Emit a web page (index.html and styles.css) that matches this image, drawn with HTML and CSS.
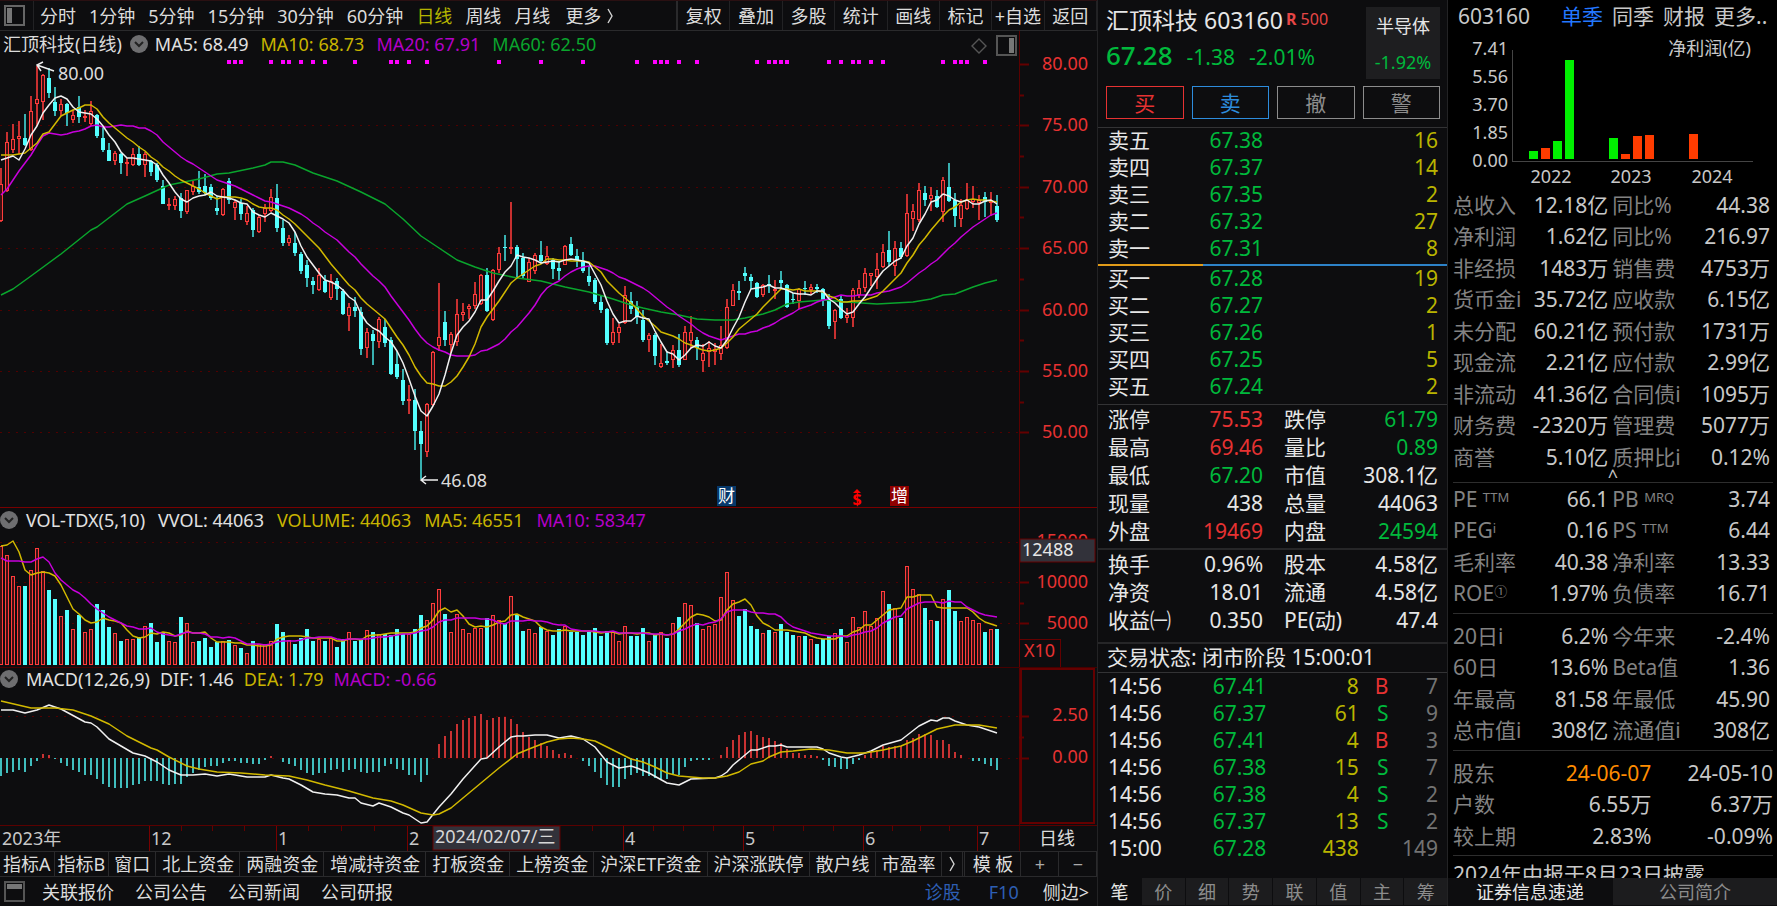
FILE: index.html
```html
<!DOCTYPE html>
<html lang="zh-CN">
<head>
<meta charset="utf-8">
<title>汇顶科技 603160</title>
<link rel="stylesheet" href="styles.css">
</head>
<body>
<div class="app">
  <main class="left">
    <nav class="toolbar">
      <button class="tool-icon" aria-label="左侧栏"><svg width="21" height="21" viewBox="0 0 21 21"><rect x="1" y="1" width="19" height="19" fill="none" stroke="#666" stroke-width="2"/><rect x="3" y="3" width="5" height="15" fill="#777"/></svg></button>
      <div class="periods">
        <button>分时</button><button>1分钟</button><button>5分钟</button><button>15分钟</button><button>30分钟</button><button>60分钟</button><button class="on">日线</button><button>周线</button><button>月线</button><button class="last">更多<svg class="more" width="8" height="16" viewBox="0 0 8 16"><path d="M2 1 L6 8 L2 15" fill="none" stroke="#d2d2d2" stroke-width="1.4"/></svg></button>
      </div>
      <div class="tools">
        <button>复权</button><button>叠加</button><button>多股</button><button>统计</button><button>画线</button><button>标记</button><button>+自选</button><button>返回</button>
      </div>
    </nav>

    <section class="panel panel-price">
      <svg class="chart" id="price"></svg>
      <header class="legend">
        <span class="name">汇顶科技(日线)</span>
        <button class="chev" aria-label="展开"><svg width="18" height="18" viewBox="0 0 18 18"><circle cx="9" cy="9" r="9" fill="#6e6e70"/><path d="M5 7 L9 11 L13 7" fill="none" stroke="#222" stroke-width="2"/></svg></button>
        <span class="w">MA5: 68.49</span><span class="y">MA10: 68.73</span><span class="m">MA20: 67.91</span><span class="g">MA60: 62.50</span>
        <span class="legend-icons"><svg width="16" height="16" viewBox="0 0 16 16"><path d="M8 1 L15 8 L8 15 L1 8 Z" fill="none" stroke="#555" stroke-width="1.4"/></svg><svg width="21" height="21" viewBox="0 0 21 21"><rect x="1" y="1" width="19" height="19" fill="none" stroke="#555" stroke-width="2"/><rect x="13" y="3" width="5" height="15" fill="#777"/></svg></span>
      </header>
    </section>
    <section class="panel panel-vol">
      <svg class="chart" id="vol"></svg>
      <header class="legend sub wide">
        <button class="chev" aria-label="展开"><svg width="18" height="18" viewBox="0 0 18 18"><circle cx="9" cy="9" r="9" fill="#6e6e70"/><path d="M5 7 L9 11 L13 7" fill="none" stroke="#222" stroke-width="2"/></svg></button>
        <span class="w">VOL-TDX(5,10)</span><span class="w">VVOL: 44063</span><span class="y">VOLUME: 44063</span><span class="y">MA5: 46551</span><span class="m">MA10: 58347</span>
      </header>
    </section>
    <section class="panel panel-macd">
      <svg class="chart" id="macd"></svg>
      <header class="legend sub">
        <button class="chev" aria-label="展开"><svg width="18" height="18" viewBox="0 0 18 18"><circle cx="9" cy="9" r="9" fill="#6e6e70"/><path d="M5 7 L9 11 L13 7" fill="none" stroke="#222" stroke-width="2"/></svg></button>
        <span class="w">MACD(12,26,9)</span><span class="w">DIF: 1.46</span><span class="y">DEA: 1.79</span><span class="m">MACD: -0.66</span>
      </header>
    </section>
    <div class="dates"><svg class="chart" id="dates"></svg></div>

    <nav class="indicators">
      <button class="tight">指标A</button><button class="tight">指标B</button><button class="box">窗口</button><button>北上资金</button><button>两融资金</button><button>增减持资金</button><button>打板资金</button><button>上榜资金</button><button>沪深ETF资金</button><button>沪深涨跌停</button><button>散户线</button><button>市盈率</button><button class="next" aria-label="更多指标"><svg width="8" height="16" viewBox="0 0 8 16"><path d="M2 1 L6 8 L2 15" fill="none" stroke="#d2d2d2" stroke-width="1.4"/></svg></button>
      <button class="tpl">模 板</button><button class="pm">+</button><button class="pm">−</button>
    </nav>
    <footer class="bottom">
      <button class="tool-icon" aria-label="下方栏"><svg width="21" height="21" viewBox="0 0 21 21"><rect x="1" y="1" width="19" height="19" fill="none" stroke="#555" stroke-width="2"/><rect x="3" y="3" width="15" height="5" fill="#777"/></svg></button>
      <a href="#">关联报价</a><a href="#">公司公告</a><a href="#">公司新闻</a><a href="#">公司研报</a>
      <span class="bottom-right"><a class="blue" href="#">诊股</a><a class="blue" href="#">F10</a><a href="#">侧边&gt;</a></span>
    </footer>
  </main>

  <aside class="quote">
    <header class="qhead">
      <div class="qtop">
        <div>
          <h1>汇顶科技 603160<small><b>R</b> 500</small></h1>
          <p class="qprice"><strong>67.28</strong><span>-1.38</span><span>-2.01%</span></p>
        </div>
        <a class="sector" href="#"><span>半导体</span><span class="dn">-1.92%</span></a>
      </div>
      <div class="trade"><button class="buy">买</button><button class="sell">卖</button><button>撤</button><button>警</button></div>
    </header>
    <table class="book" id="asks"></table>
    <div class="ratio"><i></i></div>
    <table class="book bids" id="bids"></table>
    <table class="stats" id="stats1"></table>
    <table class="stats thick" id="stats2"></table>
    <p class="status">交易状态: 闭市阶段 15:00:01</p>
    <table class="ticks" id="ticks"></table>
    <nav class="tabs"><button class="on">笔</button><button>价</button><button>细</button><button>势</button><button>联</button><button>值</button><button>主</button><button>筹</button></nav>
  </aside>

  <aside class="fund">
    <nav class="fhead"><span>603160</span><a class="on" href="#">单季</a><a href="#">同季</a><a href="#">财报</a><a href="#">更多..</a></nav>
    <div class="profit"><svg viewBox="0 0 329 157" width="329" height="157" id="profit"></svg></div>
    <table class="fin" id="fin1"></table>
    <div class="collapse"><button aria-label="收起">^</button></div>
    <table class="fin lined" id="fin2"></table>
    <table class="fin lined" id="fin3"></table>
    <table class="fin lined holders" id="fin4"></table>
    <p class="news">2024年中报于8月23日披露</p>
    <nav class="tabs ftabs"><button class="on">证券信息速递</button><button>公司简介</button></nav>
  </aside>
</div>
<script src="app.js"></script>
</body>
</html>
```

FILE: styles.css
```css
* { box-sizing: border-box; }
body {
  margin: 0;
  background: #0d0d0f;
  color: #dcdcdc;
  font-family: "Noto Sans", "Noto Sans CJK SC", sans-serif;
  font-size: 18px;
  line-height: 24px;
}
button {
  font: inherit;
  color: inherit;
  background: none;
  border: 0;
  padding: 0;
  margin: 0;
  white-space: nowrap;
  cursor: pointer;
}
a { color: inherit; text-decoration: none; }
p, h1 { margin: 0; font-weight: 400; }
svg { display: block; }
table { border-collapse: collapse; border-spacing: 0; width: 100%; table-layout: fixed; }
td, th { padding: 0; font-weight: 400; text-align: left; white-space: nowrap; }

.app {
  display: grid;
  grid-template-columns: minmax(0, 1fr) 351px 329px;
  grid-template-rows: minmax(0, 1fr);
  height: 100vh;
  min-height: 900px;
  overflow: hidden;
}
.left { display: flex; flex-direction: column; min-width: 0; }

/* top toolbar */
.toolbar {
  display: flex;
  height: 31px;
  flex: none;
  border-top: 1px solid #2a1012;
  border-bottom: 1px solid #2a2a2c;
}
.tool-icon { flex: none; width: 34px; padding-left: 4px; }
.toolbar .tool-icon { border-right: 1px solid #222224; }
.periods { display: flex; gap: 13px; padding-left: 6px; flex: 1; }
.periods button { display: flex; align-items: center; gap: 5px; }
.periods .on { color: #b4b400; }
.periods .last { padding-left: 2px; }
.tools { display: flex; flex: none; width: 421px; border-left: 2px solid #2a2a2c; }
.tools button { flex: 1 1 0; min-width: 0; border-right: 1px solid #222224; }

/* chart panels */
.panel { position: relative; min-height: 0; border-bottom: 1px solid #780000; }
.panel-price { flex: 478 1 0; }
.panel-vol { flex: 159 1 0; border-color: #460000; }
.panel-macd { flex: 158 1 0; border-color: #5a0000; }
.chart { position: absolute; inset: 0; width: 100%; height: 100%; overflow: hidden; }
.legend { position: relative; display: flex; align-items: center; gap: 12px; padding: 0 3px; height: 25px; white-space: nowrap; }
.legend.sub { padding: 0; height: 23px; gap: 10px; }
.legend.wide { gap: 13px; }
.legend .chev { margin: 0 -5px 0 -4px; }
.legend.sub .chev { margin: 0 -2px 0 0; }
.legend.wide .chev { margin: 0 -5px 0 0; }
.legend-icons { margin-left: auto; margin-right: 77px; display: flex; align-items: center; gap: 9px; padding-top: 4px; }
.w { color: #e1e1e1; }
.y { color: #c8b400; }
.m { color: #b400c8; }
.g { color: #0aa52d; }
.dates { position: relative; flex: none; height: 25px; }

/* indicator and link bars */
.indicators { display: flex; flex: none; height: 26px; border-top: 1px solid #2a2a2c; border-bottom: 1px solid #2a2a2c; }
.indicators button { padding: 0 5px 0 6px; border-right: 1px solid #2a2a2c; }
.indicators .tight { padding: 0 3px; }
.indicators .box { padding: 0 5px; }
.indicators .next { padding: 0 6px; }
.indicators .tpl { margin-left: auto; width: 57px; border-left: 1px solid #2a2a2c; }
.indicators .pm { width: 38px; color: #aaa; }
.bottom { display: flex; align-items: center; gap: 21px; flex: none; height: 29px; }
.bottom .tool-icon { width: 21px; box-sizing: content-box; margin-right: -4px; }
.bottom-right { margin-left: auto; margin-right: 8px; display: flex; gap: 24px; }
.blue { color: #2d5fb4; }
.bottom-right .blue:first-child { margin-right: 4px; }

/* quote column */
.quote {
  display: flex;
  flex-direction: column;
  border-left: 1px solid #232325;
  border-right: 1px solid #232325;
  font-size: 21px;
  line-height: 27px;
  color: #e6e6e6;
}
.qhead { height: 128px; flex: none; padding: 7px 7px 0 8px; border-bottom: 1px solid #333335; }
.qtop { display: flex; justify-content: space-between; height: 72px; }
.qhead h1 { font-size: 23px; line-height: 27px; white-space: nowrap; }
.qhead small { font-size: 16px; color: #e64646; margin-left: 3px; vertical-align: 4px; line-height: 1; }
.qprice { display: flex; align-items: baseline; gap: 14px; line-height: 36px; margin-top: 3px; color: #00b93c; }
.qprice strong { font-size: 26px; font-weight: 500; }
.sector { width: 74px; display: flex; flex-direction: column; justify-content: space-between; align-items: center; background: #1e1e20; font-size: 18px; line-height: 24px; padding: 7px 0 5px; }
.trade { display: grid; grid-template-columns: repeat(4, 1fr); gap: 8px; margin-top: 7px; }
.trade button { height: 33px; border: 1px solid #8c8c8c; color: #8c8c8c; line-height: 28px; }
.trade .buy { border-color: #e63232; color: #e63232; }
.trade .sell { border-color: #2d8cdc; color: #2d8cdc; }
.quote > table { flex: none; margin: 0 9px 0 10px; width: calc(100% - 19px); }
.book td, .book th { height: 27px; }
.ratio { height: 2px; flex: none; margin-top: 2px; background: #2d82c8; }
.ratio i { display: block; height: 2px; width: 30%; background: #e19b19; }
.book td, .stats td { text-align: right; }
.stats td, .stats th { height: 28px; line-height: 28px; }
.stats .second { padding-left: 21px; }
.quote > #asks { margin-top: -1px; }
.quote > #bids { margin-top: -1px; margin-bottom: 4px; }
.quote > #stats1 { margin-bottom: 3px; }
.rule { height: 1px; flex: none; background: #333335; }
.rule.thick { height: 2px; background: #262628; }
.rt { text-align: right; }
.up { color: #e63232; }
.dn { color: #00b93c; }
.qy { color: #b9b400; }
.gr { color: #737373; }
.status { flex: none; height: 31px; line-height: 26px; padding-left: 9px; border-top: 2px solid #262628; border-bottom: 1px solid #333335; margin-top: 8px; white-space: nowrap; }
.ticks td { height: 27px; }
.tabs { display: flex; flex: none; gap: 1px; height: 28px; margin-top: auto; padding-bottom: 1px; font-size: 18px; line-height: 24px; color: #8c8c8c; }
.tabs button { flex: 1 1 0; background: #1c1c1e; }
.tabs .on { background: #0d0d0f; color: #e6e6e6; }

/* fundamentals column */
.fund { display: flex; flex-direction: column; background: #000; font-size: 21px; line-height: 28px; color: #c8c8c8; overflow: hidden; min-height: 0; }
.fhead { display: flex; flex: none; gap: 9px; height: 32px; align-items: center; padding-left: 10px; white-space: nowrap; }
.fhead span { margin-right: 22px; }
.fhead .on { color: #2378ff; }
.profit { flex: none; height: 157px; }
.fin { flex: none; }
.fund > table { width: calc(100% - 12px); margin: 0 7px 0 5px; }
.fin th { color: #828282; }
.fin td { text-align: right; }
.fin th:nth-child(3) { padding-left: 4px; }
.fin tr { height: 31px; }
.fin tr:nth-child(even) { height: 32px; }
.fin sup { font-size: 13px; line-height: 1; vertical-align: 5px; }
.collapse { flex: none; height: 11px; border-bottom: 1px solid #2d2d2d; margin: 0 4px 0 5px; }
.collapse button { display: block; margin: -4px auto 0; height: 14px; line-height: 16px; font-size: 18px; }
.fund > #fin2, .fund > #fin3 { margin-bottom: 4px; }
.divider { height: 1px; flex: none; background: #2d2d2d; margin: 0 4px 6px 5px; }
.fund > .holders { width: calc(100% - 9px); margin: 0 4px 4px 5px; }
.date { color: #ff8c00; }
.news { flex: 1 1 0; min-height: 0; overflow: hidden; margin: 0 4px 0 5px; border-top: 1px solid #2d2d2d; line-height: 36px; white-space: nowrap; }
.ftabs { background: #0d0d0f; }
```

FILE: app.js
```js
// Each candle: direction (1 up, 0 down), high, body top, body bottom, low, in thirds of a pixel from the page top.
const candles = `1 505 553 664 668,1 397 427 573 578,1 373 419 452 460,1 365 410 419 462,0 342 415 437 440,1 289 333 452 454,1 198 297 312 378,1 222 226 307 362,0 205 234 279 294,0 261 306 333 349,
1 297 311 333 350,0 308 312 340 380,1 330 346 361 370,0 289 320 351 370,1 330 350 356 368,1 303 333 374 378,0 343 346 409 414,0 383 415 450 456,0 430 450 483 485,1 453 459 483 496,
0 460 464 490 524,1 475 487 491 528,1 445 462 497 500,0 440 464 495 500,1 458 464 496 532,0 480 485 517 530,0 490 497 540 546,0 540 558 612 614,1 595 612 617 630,1 590 598 620 632,
0 580 594 634 654,1 570 572 636 644,1 545 560 577 585,0 514 562 577 582,0 522 560 580 585,0 553 562 596 600,0 590 626 634 645,1 565 568 645 650,0 535 544 601 613,1 600 608 626 662,
0 598 609 644 660,1 620 640 668 676,0 626 632 692 713,1 645 652 698 700,1 612 626 643 668,1 568 592 635 638,0 553 594 684 698,0 660 684 730 740,1 705 715 731 740,0 697 729 759 770,
0 758 762 815 825,0 780 797 837 862,0 833 845 858 884,1 806 827 872 876,0 826 846 878 882,1 824 845 896 902,0 835 846 868 903,0 870 874 945 947,1 912 922 950 996,0 892 924 936 952,
0 924 937 1048 1068,1 987 999 1047 1077,0 992 1004 1026 1096,1 953 958 1027 1046,0 960 982 1030 1042,0 1012 1022 1125 1128,0 1055 1094 1133 1140,0 1108 1143 1205 1217,1 1157 1200 1203 1244,0 1170 1202 1296 1352,
0 1264 1296 1336 1440,1 1210 1214 1360 1374,1 1054 1057 1216 1220,1 850 1012 1041 1054,0 936 967 1021 1040,1 998 1003 1037 1060,1 900 945 1028 1040,1 910 937 946 965,1 913 919 928 960,1 847 885 920 930,
1 824 828 913 916,0 806 828 936 939,1 808 812 963 965,1 743 760 812 822,0 706 741 746 785,1 608 741 745 762,0 735 742 778 833,0 760 776 831 835,1 775 788 847 848,1 760 766 815 825,
0 724 766 784 790,1 738 768 793 795,0 776 782 809 840,0 785 805 814 843,1 735 739 795 797,0 711 734 765 768,0 748 770 782 803,0 757 785 815 820,0 800 829 847 861,0 836 842 908 915,
0 890 909 931 941,0 926 928 1030 1036,1 955 997 1031 1036,1 975 984 1001 1032,1 860 888 972 974,0 878 905 930 943,0 905 920 952 974,0 932 962 1022 1028,1 1000 1007 1022 1058,0 1000 1008 1070 1096,
1 1035 1092 1102 1106,0 1055 1084 1092 1098,1 1038 1052 1082 1105,0 1004 1053 1098 1104,1 980 997 1081 1083,1 950 997 1024 1046,0 1012 1022 1045 1082,1 1035 1060 1085 1118,1 1025 1047 1057 1102,1 1030 1048 1058 1096,
1 981 1036 1063 1082,1 900 922 1045 1048,1 855 871 920 921,0 846 875 880 902,0 801 822 831 845,0 824 832 846 870,0 848 851 893 896,1 853 857 888 893,0 828 853 860 880,1 842 868 876 898,
0 814 842 851 868,0 854 856 923 925,0 880 898 903 915,1 865 868 905 930,0 846 866 870 888,1 854 863 872 884,0 855 863 870 882,0 866 870 905 920,0 885 905 980 988,1 928 931 968 1020,
0 891 900 955 960,1 925 946 955 970,1 865 872 955 983,1 843 867 888 896,1 805 822 865 879,1 820 822 829 860,1 761 810 834 870,1 733 756 802 805,0 693 751 788 800,1 724 746 798 830,
0 728 746 772 778,1 584 640 768 772,1 612 634 658 695,1 550 571 661 668,0 560 580 600 618,1 562 585 598 635,0 570 590 621 625,1 531 541 636 668,0 490 563 604 608,0 580 601 648 682,
1 598 616 658 682,1 549 602 627 631,1 559 598 608 625,1 585 600 610 662,0 578 593 608 652,1 576 603 607 650,0 585 620 660 667`.split(',').map(s => s.trim().split(' ').map(Number));

const volume = [142,168,232,262,260,213,146,217,273,300,352,332,389,348,398,389,314,332,385,403,427,421,421,415,380,372,430,400,425,430,354,371,430,427,418,444,430,427,422,438,448,461,427,435,435,425,376,399,422,435,418,390,427,421,427,418,444,420,398,427,422,394,399,404,405,408,390,405,405,390,349,362,312,271,346,398,345,389,403,386,388,358,349,362,376,290,348,395,389,403,385,395,408,390,381,399,399,408,400,386,412,395,400,427,380,412,412,386,425,408,398,417,371,354,313,317,373,390,381,376,294,218,304,350,331,381,390,403,394,398,376,399,408,412,412,421,436,421,412,403,390,430,353,385,335,380,358,277,314,326,358,200,271,286,327,362,367,299,273,336,367,353,362,371,399,389,390];
const macdBars = [347,340,335,330,335,318,303,283,284,298,308,317,330,335,345,345,357,371,380,384,384,384,375,371,362,362,362,371,376,371,371,352,340,330,321,317,317,308,303,303,308,308,312,312,299,289,293,307,312,318,330,340,344,340,340,330,326,335,330,326,335,340,335,335,317,312,326,330,344,345,366,345,293,252,229,212,193,180,175,167,162,180,175,170,171,176,193,216,230,240,248,257,270,283,279,285,293,303,317,335,353,375,380,380,357,345,340,348,348,353,357,357,345,345,321,303,299,299,299,293,284,262,239,225,216,212,225,230,235,243,248,266,279,279,284,284,288,299,317,321,326,326,312,299,285,275,270,257,262,257,257,239,234,221,221,225,239,239,252,275,284,293,302,302,311,317,330];
const pairs = s => s.split(' ').map(p => p.split(':').map(Number));
const ma60 = pairs('0:886 2:868 5:830 10:762 15:690 16:683 21:614 24:588 28:557 33:537 36:523 38:519 42:504 44:496 45:486 47:486 49:495 52:521 56:545 60:577 64:614 67:658 70:710 73:746 76:780 79:802 82:820 86:837 90:846 94:862 98:878 102:898 105:918 107:926 110:937 113:948 116:958 119:962 122:962 124:955 127:943 129:931 131:914 133:908 137:903 141:908 146:913 152:908 155:899 157:888 159:884 162:862 164:852 166:843');
const dif = pairs('0:149 2:149 4:158 6:150 8:136 10:148 14:185 15:189 16:200 18:237 20:258 22:278 24:288 26:305 28:330 30:346 32:346 34:342 36:347 38:342 41:350 43:352 44:350 45:344 47:355 48:357 50:376 52:395 54:401 56:405 58:413 59:414 60:428 62:437 63:430 65:441 67:460 68:464 70:490 71:487 73:440 75:403 77:357 80:298 81:294 83:260 85:231 86:228 87:229 89:225 91:225 93:234 95:229 97:238 99:262 101:305 103:325 105:319 106:323 108:340 111:368 113:375 115:356 119:353 120:347 121:335 122:316 124:284 125:270 126:270 128:257 129:257 130:254 131:261 136:261 137:267 138:280 140:290 141:294 143:284 145:272 147:254 150:240 153:199 155:181 156:184 157:175 158:175 159:184 161:195 163:200 164:208 165:212 166:220');
const dea = pairs('0:123 5:143 9:144 12:150 15:167 18:193 21:228 25:263 26:270 28:292 31:318 33:328 36:337 40:340 44:346 48:347 51:360 54:376 58:392 62:415 65:424 67:436 70:460 72:464 73:461 75:444 78:400 81:353 83:325 86:283 88:266 91:245 93:238 95:235 97:236 99:243 101:262 103:280 105:298 107:306 109:320 111:338 113:349 117:353 119:354 121:348 123:335 125:312 127:302 128:291 130:275 132:272 135:266 138:269 141:278 144:279 147:271 150:257 152:244 154:225 156:208 159:194 163:195 166:203');
const signals = [38,39,40,45,47,48,50,52,54,59,65,66,68,71,83,90,97,106,109,110,111,113,116,126,128,129,130,131,138,140,142,143,145,147,157,159,160,161,164];

// Moving average over n values; seed supplies the first points, whose history is off screen.
function average(values, n, seed) {
  return values.map((_, i) => {
    if (i < n - 1) return [i, seed[i]];
    let sum = 0;
    for (let k = i - n + 1; k <= i; k++) sum += values[k];
    return [i, sum / n];
  });
}

const RED = '#ff3c3c', CYAN = '#54ffff', AXIS = 77;
const rect = (x, y, w, h, fill, extra = '') => `<rect x="${x}" y="${y}" width="${w}" height="${h}" fill="${fill}" ${extra}/>`;
const line = (x1, y1, x2, y2, c, extra = '') => `<line x1="${x1}" y1="${y1}" x2="${x2}" y2="${y2}" stroke="${c}" ${extra}/>`;
const text = (x, y, s, fill, anchor = 'start', size = 18) => `<text x="${x}" y="${y}" fill="${fill}" text-anchor="${anchor}" font-size="${size}">${s}</text>`;

function scale(id, refHeight, offset) {
  const el = document.getElementById(id);
  const w = el.clientWidth, h = el.clientHeight, plot = w - AXIS - 1;
  const k = h / refHeight;
  return {
    el, w, h, plot,
    x: i => Math.round((1 + 6 * i) * plot / 1019),
    y: v => Math.round((v / 3 - offset) * k),
    px: v => Math.round(v * plot / 1019)
  };
}
function poly(s, pts, color) {
  return `<polyline fill="none" stroke="${color}" stroke-width="1.5" stroke-linejoin="round" points="${pts.map(p => s.x(p[0]) + ',' + s.y(p[1])).join(' ')}"/>`;
}
const grid = (s, v) => line(0, s.y(v) + .5, s.plot, s.y(v) + .5, '#500000', 'stroke-dasharray="2 6"');
const tick = (s, v, len) => line(s.plot, s.y(v) + .5, s.plot + len, s.y(v) + .5, '#640000', 'stroke-width="2"');
const axisLine = s => line(s.plot + .5, 0, s.plot + .5, s.h, '#5a0000');

function drawPrice() {
  const s = scale('price', 477, 31);
  let o = '';
  for (let p = 0; p < 7; p++) {
    const v = 192 + p * 184.6;
    if (p) o += grid(s, v);
    o += tick(s, v, 10) + text(s.w - 9, s.y(v) + 6, (80 - 5 * p).toFixed(2), '#e63232', 'end');
    if (p < 6) o += tick(s, v + 92, 5);
  }
  o += axisLine(s);
  candles.forEach(([up, hi, top, bottom, lo], i) => {
    const x = s.x(i), t = s.y(top), b = Math.max(s.y(bottom), t + 1);
    if (up) {
      o += rect(x - 1, s.y(hi), 2, s.y(lo) - s.y(hi), '#c83030');
      o += rect(x - 1.5, t + .5, 3, Math.max(b - t - 1, 1), '#3c1012', `stroke="${RED}"`);
    } else {
      o += rect(x - 1, s.y(hi), 2, s.y(lo) - s.y(hi), '#38b0b0');
      o += rect(x - 2, t, 4, b - t, CYAN);
    }
  });
  const close = candles.map(c => c[0] ? c[2] : c[3]);
  o += poly(s, ma60, '#0aa52d');
  o += poly(s, average(close, 20, [585,567,542,515,490,465,435,410,400,402,405,402,398,393,387,380,377,381,381]), '#c800dc');
  o += poly(s, average(close, 10, [467,467,466,462,460,445,430,402,398]), '#d2b900');
  o += poly(s, average(close, 5, [482,475,468,482]), '#f0f0f0');
  signals.forEach(i => { o += rect(s.x(i) - 2, s.y(180), 4, 4, '#ff00ff'); });
  const hx = s.x(6), hy = s.y(198);
  o += `<path d="M${hx + 17} ${hy + 5} L${hx} ${hy - 1} m6 -3 l-6 3 l4 6" fill="none" stroke="#eee" stroke-width="1.5"/>` + text(hx + 21, hy + 14, '80.00', '#dcdcdc');
  const lx = s.x(70), ly = s.y(1443);
  o += `<path d="M${lx + 17} ${ly} L${lx} ${ly} m5 -4 l-5 4 l5 4" fill="none" stroke="#eee" stroke-width="1.5"/>` + text(lx + 20, ly + 7, '46.08', '#dcdcdc');
  const by = s.h - 21;
  o += rect(s.px(717), by, 19, 20, '#06386b') + text(s.px(717) + 1, by + 16, '财', '#fff', 'start', 17);
  o += rect(s.px(890), by, 19, 20, '#910000') + text(s.px(890) + 1, by + 16, '增', '#fff', 'start', 17);
  o += `<path d="M${s.px(857) - 4} ${by + 7} l4 -4 l4 4 z" fill="#f00"/><text x="${s.px(857)}" y="${by + 19}" fill="#f00" font-weight="700" font-size="16" text-anchor="middle">$</text>`;
  s.el.innerHTML = o;
}

function drawVolume() {
  const s = scale('vol', 158, 9);
  let o = grid(s, 128) + grid(s, 250) + grid(s, 372) + tick(s, 250, 10) + tick(s, 313, 5) + tick(s, 372, 10) + axisLine(s);
  const base = s.y(497);
  volume.forEach((v, i) => {
    const x = s.x(i), t = s.y(v);
    o += candles[i][0] ? rect(x - 1.5, t + .5, 3, base - t - 1, '#3c1012', `stroke="${RED}"`) : rect(x - 2, t, 4, base - t, CYAN);
  });
  o += poly(s, average(volume, 5, [142,137,126,160]), '#d2b900');
  o += poly(s, average(volume, 10, [177,187,187,187,190,189,180,175,190]), '#c800dc');
  o += text(s.w - 9, s.y(128) + 5, '15000', '#e63232', 'end') + text(s.w - 9, s.y(250) + 6, '10000', '#e63232', 'end') + text(s.w - 9, s.y(372) + 6, '5000', '#e63232', 'end');
  o += rect(s.plot + 1, s.y(120), AXIS - 2, 23, '#32323a', 'stroke="#640000"') + text(s.plot + 3, s.y(120) + 17, '12488', '#e6e6e6');
  o += rect(s.plot + .5, s.h - 26.5, 41, 30, 'none', 'stroke="#640000"') + text(s.plot + 5, s.h - 9, 'X10', '#e63232');
  s.el.innerHTML = o;
}

function drawMacd() {
  const s = scale('macd', 157, 8);
  let o = grid(s, 167) + grid(s, 293) + axisLine(s) + tick(s, 167, 10) + tick(s, 230, 5) + tick(s, 293, 10);
  macdBars.forEach((v, i) => {
    const a = s.y(Math.min(v, 293)), b = s.y(Math.max(v, 293));
    if (b > a) o += rect(s.x(i) - 1, a, 2, b - a, v < 293 ? '#c83232' : '#40bebe');
  });
  o += poly(s, dif, '#f0f0f0') + poly(s, dea, '#d2b900');
  o += rect(s.plot + 2, 1, AXIS - 4, s.h - 3, 'none', 'stroke="#640000" stroke-width="2"');
  o += text(s.w - 9, s.y(167) + 5, '2.50', '#e63232', 'end') + text(s.w - 9, s.y(293) + 5, '0.00', '#e63232', 'end');
  s.el.innerHTML = o;
}

function drawDates() {
  const s = scale('dates', 25, 0);
  let o = text(2, 19, '2023年', '#c8c8c8');
  [[149, '12'], [276, '1'], [407, '2'], [623, '4'], [743, '5'], [863, '6'], [977, '7']].forEach(([x, label]) => {
    o += line(s.px(x) + .5, 0, s.px(x) + .5, 25, '#780000') + text(s.px(x) + 2, 19, label, '#c8c8c8');
  });
  [181,212,244,308,341,374,592,653,683,713,773,803,833,892,920,949].forEach(x => { o += line(s.px(x) + .5, 0, s.px(x) + .5, 5, '#640000'); });
  o += rect(s.px(433), 0, 127, 24, '#32323a', 'stroke="#640000"') + text(s.px(433) + 2, 17, '2024/02/07/三', '#d7d7d7');
  o += line(s.plot + .5, 0, s.plot + .5, 25, '#460000') + text(s.plot + 38, 19, '日线', '#dcdcdc', 'middle');
  s.el.innerHTML = o;
}

function drawProfit() {
  let o = line(64.5, 18, 64.5, 129, '#444') + line(64, 129.5, 305, 129.5, '#444');
  ['7.41', '5.56', '3.70', '1.85', '0.00'].forEach((t, i) => { o += text(60, 23 + 28 * i, t, '#c8c8c8', 'end'); });
  [[81,151,1],[93,148,0],[105,141,1],[117,60,1],[161,138,1],[173,154,0],[185,136,0],[197,135,0],[241,134,0]].forEach(([x, y, g]) => {
    o += rect(x, y - 32, 9, 159 - y, g ? '#00f000' : '#ff3c00');
  });
  [[103, '2022'], [183, '2023'], [264, '2024']].forEach(([x, t]) => { o += text(x, 151, t, '#c8c8c8', 'middle'); });
  o += text(303, 23, '净利润(亿)', '#c8c8c8', 'end');
  document.getElementById('profit').innerHTML = o;
}

const fill = (id, cols, rows) => {
  document.getElementById(id).innerHTML = `<colgroup>${cols.map(c => `<col style="width:${c}%">`).join('')}</colgroup><tbody>${rows.join('')}</tbody>`;
};
const book = r => `<tr><th>${r[0]}</th><td class="dn">${r[1]}</td><td class="qy">${r[2]}</td></tr>`;
fill('asks', [20, 27, 53], [['卖五','67.38',16],['卖四','67.37',14],['卖三','67.35',2],['卖二','67.32',27],['卖一','67.31',8]].map(book));
fill('bids', [20, 27, 53], [['买一','67.28',19],['买二','67.27',2],['买三','67.26',1],['买四','67.25',5],['买五','67.24',2]].map(book));
const stat = r => `<tr><th>${r[0]}</th><td class="${r[4] || ''}">${r[1]}</td><th class="second">${r[2]}</th><td class="${r[5] || ''}">${r[3]}</td></tr>`;
fill('stats1', [22, 25, 25, 28], [['涨停','75.53','跌停','61.79','up','dn'],['最高','69.46','量比','0.89','up','dn'],['最低','67.20','市值','308.1亿','dn'],['现量','438','总量','44063'],['外盘','19469','内盘','24594','up','dn']].map(stat));
fill('stats2', [22, 25, 25, 28], [['换手','0.96%','股本','4.58亿'],['净资','18.01','流通','4.58亿'],['收益㈠','0.350','PE(动)','47.4']].map(stat));
document.getElementById('stats1').insertAdjacentHTML('beforebegin', '<div class="rule"></div>');
document.getElementById('stats2').insertAdjacentHTML('beforebegin', '<div class="rule thick"></div>');
fill('ticks', [24, 24, 28, 9, 15], [['14:56','67.41',8,'B',7],['14:56','67.37',61,'S',9],['14:56','67.41',4,'B',3],['14:56','67.38',15,'S',7],['14:56','67.38',4,'S',2],['14:56','67.37',13,'S',2],['15:00','67.28',438,'',149]].map(r =>
  `<tr><td>${r[0]}</td><td class="dn rt">${r[1]}</td><td class="qy rt">${r[2]}</td><td class="rt ${r[3] === 'B' ? 'up' : 'dn'}">${r[3]}</td><td class="gr rt">${r[4]}</td></tr>`));

const four = r => `<tr><th>${r[0]}</th><td>${r[1]}</td><th>${r[2]}</th><td>${r[3]}</td></tr>`;
fill('fin1', [20, 29, 22, 29], [['总收入','12.18亿','同比%','44.38'],['净利润','1.62亿','同比%','216.97'],['非经损','1483万','销售费','4753万'],['货币金i','35.72亿','应收款','6.15亿'],['未分配','60.21亿','预付款','1731万'],['现金流','2.21亿','应付款','2.99亿'],['非流动','41.36亿','合同债i','1095万'],['财务费','-2320万','管理费','5077万'],['商誉','5.10亿','质押比i','0.12%']].map(four));
fill('fin2', [20, 29, 22, 29], [['PE <sup>TTM</sup>','66.1','PB <sup>MRQ</sup>','3.74'],['PEG<sup>i</sup>','0.16','PS <sup>TTM</sup>','6.44'],['毛利率','40.38','净利率','13.33'],['ROE<sup>①</sup>','1.97%','负债率','16.71']].map(four));
fill('fin3', [20, 29, 22, 29], [['20日i','6.2%','今年来','-2.4%'],['60日','13.6%','Beta值','1.36'],['年最高','81.58','年最低','45.90'],['总市值i','308亿','流通值i','308亿']].map(four));
fill('fin4', [25, 37, 38], [['股东','<span class="date">24-06-07</span>','24-05-10'],['户数','6.55万','6.37万'],['较上期','2.83%','-0.09%']].map(r => `<tr><th>${r[0]}</th><td>${r[1]}</td><td>${r[2]}</td></tr>`));
['fin3', 'fin4'].forEach(id => document.getElementById(id).insertAdjacentHTML('beforebegin', '<div class="divider"></div>'));

function draw() { drawPrice(); drawVolume(); drawMacd(); drawDates(); }
drawProfit();
draw();
addEventListener('resize', draw);
```
